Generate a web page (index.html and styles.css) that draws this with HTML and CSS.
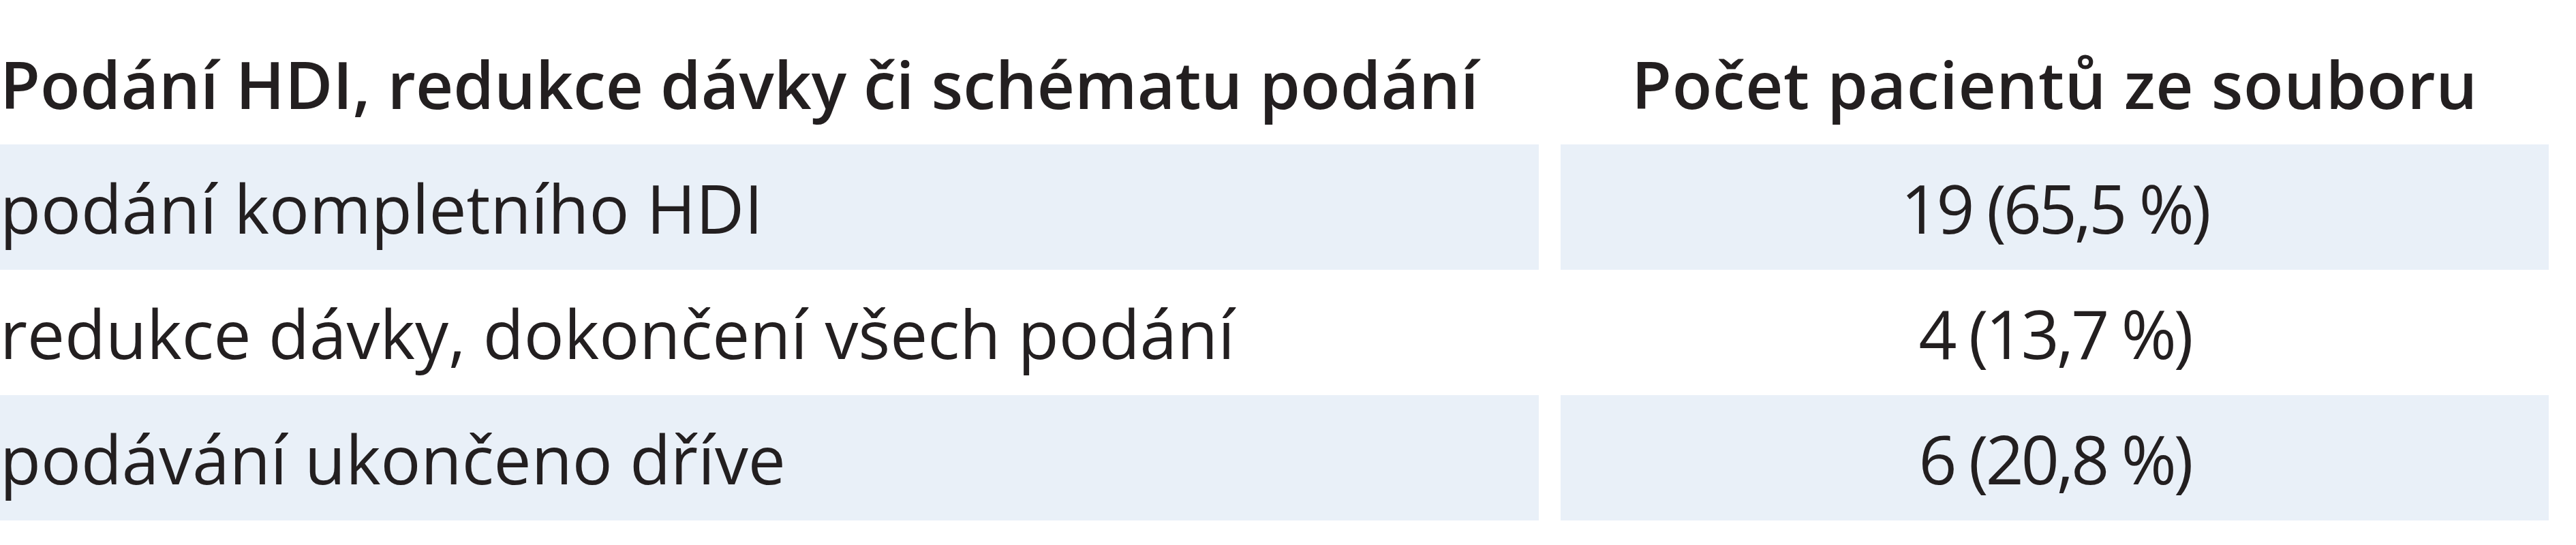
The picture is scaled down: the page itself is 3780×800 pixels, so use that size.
FILE: index.html
```html
<!DOCTYPE html>
<html lang="cs">
<head>
<meta charset="utf-8">
<title>Podání HDI</title>
<link rel="stylesheet" href="styles.css">
</head>
<body>
<div class="table">
  <div class="cell head left">Podání HDI, redukce dávky či schématu podání</div>
  <div class="cell head right">Počet pacientů ze souboru</div>

  <div class="cell left shade">podání kompletního HDI</div>
  <div class="cell right num shade">19 (65,5 %)</div>

  <div class="cell left">redukce dávky, dokončení všech podání</div>
  <div class="cell right num">4 (13,7 %)</div>

  <div class="cell left shade">podávání ukončeno dříve</div>
  <div class="cell right num shade">6 (20,8 %)</div>
</div>
</body>
</html>
```

FILE: styles.css
```css
html, body {
  margin: 0;
  padding: 0;
  background: #ffffff;
}

body {
  width: 3780px;
  height: 800px;
  overflow: hidden;
  font-family: "Open Sans", "Noto Sans", sans-serif;
  color: #231f20;
}

.table {
  display: grid;
  grid-template-columns: 2258px 1450px;
  grid-template-rows: 212px 184px 184px 184px;
  column-gap: 32px;
  width: 3740px;
}

.cell {
  box-sizing: border-box;
  font-size: 98px;
  line-height: 118px;
  padding-top: 34px;
  white-space: nowrap;
}

.head {
  font-size: 96px;
  font-weight: 600;
  line-height: 115px;
  padding-top: 65px;
}

.head.right {
  letter-spacing: 0.6px;
}

.left {
  text-align: left;
  padding-left: 0;
}

.right {
  text-align: center;
}

.num {
  letter-spacing: -4px;
}

.shade {
  background: #e9f0f8;
}
```
